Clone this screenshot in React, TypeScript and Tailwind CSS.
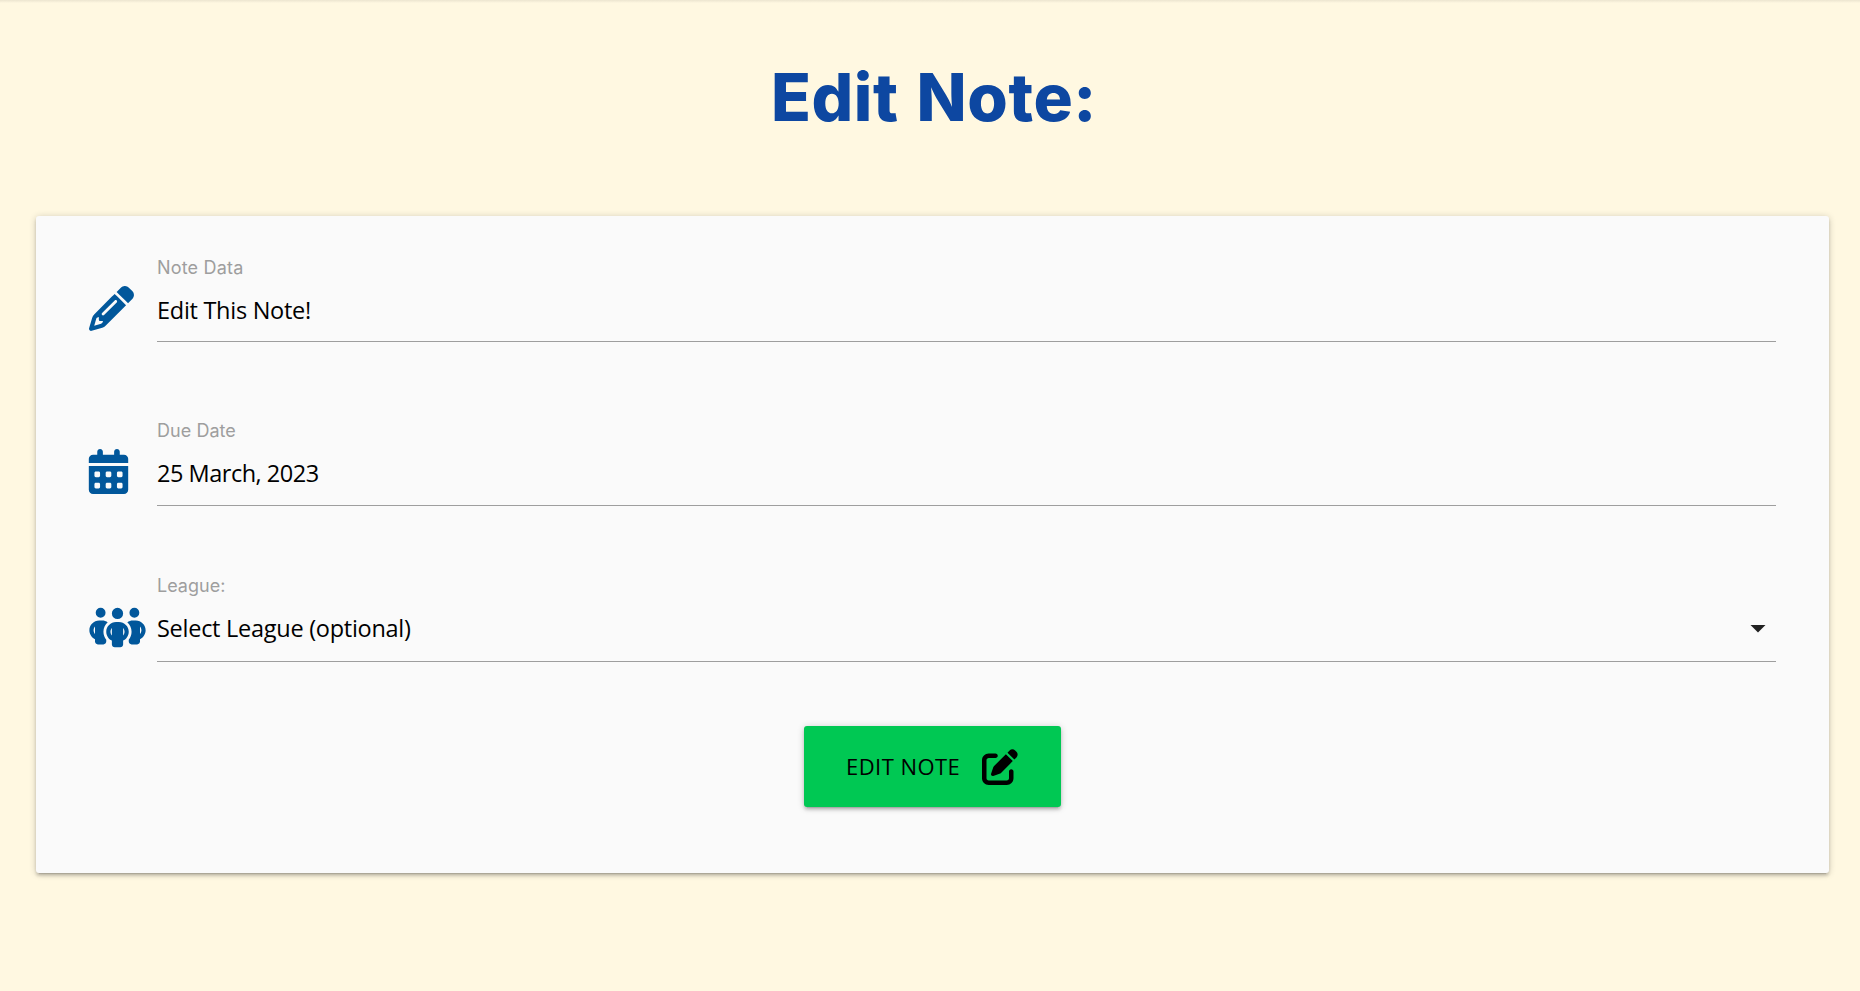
import type { ReactNode } from "react";
import { FaPencil, FaCalendarDays, FaPeopleGroup, FaPenToSquare } from "react-icons/fa6";

function Field({ icon, label, value, caret, className, labelClass, valueClass }: { icon: ReactNode; label: string; value: string; caret?: boolean; className: string; labelClass: string; valueClass: string }) {
  return (
    <div className={`flex h-[88px] ${className}`}>
      <div className="w-[68px] shrink-0 text-[45px] text-[#01579b]">{icon}</div>
      <div className="flex flex-1 flex-col border-b border-[#9e9e9e]">
        <label className={`font-[Inter,sans-serif] text-[18px] leading-[26px] text-[#9e9e9e] ${labelClass}`}>{label}</label>
        <div className={`flex items-center justify-between pr-[10px] font-['Open_Sans',sans-serif] text-[23.5px] leading-[36px] text-black ${valueClass}`}>
          <span>{value}</span>
          {caret && (
            <svg className="mt-[2px]" width="16" height="8" viewBox="0 0 16 8" fill="#212121"><path d="M0.5 0h15L8 7.5z" /></svg>
          )}
        </div>
      </div>
    </div>
  );
}

export default function App() {
  return (
    <div className="h-[991px] w-full overflow-hidden bg-[#fff8e1]">
      <div className="h-[3px] bg-linear-to-b from-[#ece5d0] to-[#fff8e1]" />
      <h1 className="mt-[55px] pl-[8px] text-center font-[Inter,sans-serif] text-[65.5px] leading-[80px] font-extrabold tracking-[0.6px] text-[#0d47a1] [word-spacing:3px]">Edit Note:</h1>
      <main className="mt-[78px] ml-[36px] h-[657px] w-[1793px] rounded-[3px] bg-[#fafafa] pt-[38px] pr-[53px] pl-[53px] shadow-[0_3px_3px_0_rgba(0,0,0,0.14),0_4px_1px_-3px_rgba(0,0,0,0.12),0_1px_7px_0_rgba(0,0,0,0.2)]">
        <Field className="" labelClass="mt-px tracking-[0.18px]" valueClass="mt-[11px] tracking-[-0.28px]" icon={<FaPencil className="mt-[32px]" />} label="Note Data" value="Edit This Note!" />
        <Field className="mt-[76px]" labelClass="tracking-[0.05px]" valueClass="mt-[11px] tracking-[-0.48px]" icon={<FaCalendarDays className="mt-[31px] -ml-[3px]" />} label="Due Date" value="25 March, 2023" />
        <Field className="mt-[68px]" labelClass="-mt-px" valueClass="mt-[11px] tracking-[-0.27px]" icon={<FaPeopleGroup className="mt-[31px] h-[45px] w-[57px]" />} label="League:" value="Select League (optional)" caret />
        <button className="mx-auto mt-[64px] flex h-[81px] w-[257px] items-center rounded-[3px] bg-[#00c853] pl-[42px] shadow-[0_3px_3px_0_rgba(0,0,0,0.14),0_4px_1px_-3px_rgba(0,0,0,0.12),0_1px_7px_0_rgba(0,0,0,0.2)]">
          <span className="w-[136px] text-left font-['Open_Sans',sans-serif] text-[22px] tracking-[0.45px] whitespace-nowrap text-black">EDIT NOTE</span>
          <FaPenToSquare className="text-[36px] text-black" />
        </button>
      </main>
    </div>
  );
}
